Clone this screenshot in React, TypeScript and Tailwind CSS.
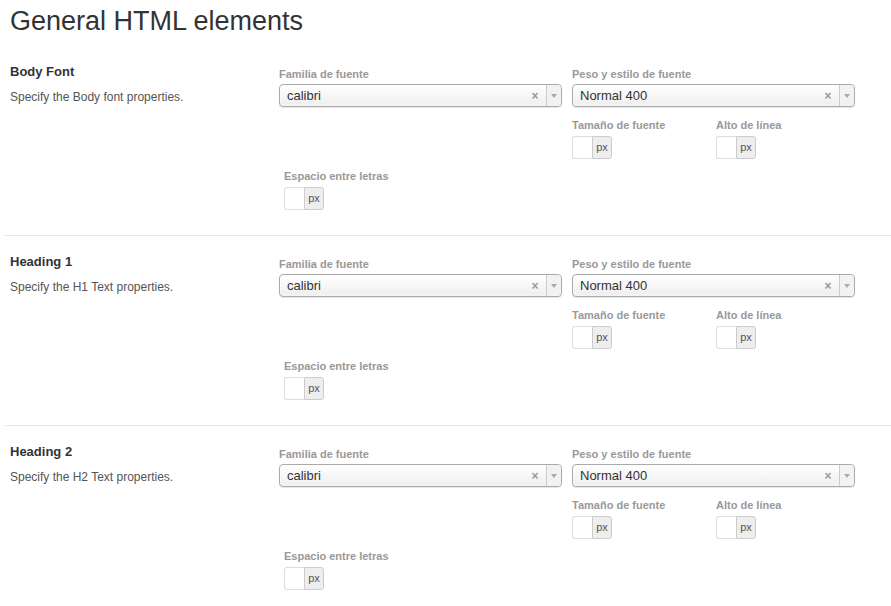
const sections = [
  { title: "Body Font", desc: "Specify the Body font properties." },
  { title: "Heading 1", desc: "Specify the H1 Text properties." },
  { title: "Heading 2", desc: "Specify the H2 Text properties." },
];

function FieldLabel({ children }: { children: React.ReactNode }) {
  return <div className="h-[14px] text-[11px] leading-[14px] font-bold text-[#999]">{children}</div>;
}

function Select({ value }: { value: string }) {
  return (
    <div className="mt-[3px] flex h-[23px] w-[283px] items-stretch rounded-[4px] border border-[#aaa] bg-gradient-to-b from-white to-[#eeeeee] shadow-[inset_0_0_3px_#fff,0_1px_1px_rgba(0,0,0,0.1)]">
      <div className="flex flex-1 items-center pl-[7px] text-[13px] text-[#333]">{value}</div>
      <div className="flex w-[22px] items-center justify-center text-[12px] font-bold text-[#999]">×</div>
      <div className="flex w-[15px] items-center justify-center rounded-r-[4px] border-l border-[#ccc] bg-[#f2f2f2]">
        <svg width="6" height="4" viewBox="0 0 6 4">
          <path d="M0 0 L6 0 L3 4 Z" fill="#aaa" />
        </svg>
      </div>
    </div>
  );
}

function PxInput() {
  return (
    <div className="mt-[4px] flex h-[23px] w-[40px]">
      <div className="w-[20px] rounded-l-[3px] border border-r-0 border-[#ddd] bg-white" />
      <div className="flex w-[20px] items-center justify-center rounded-r-[3px] border border-[#ccc] bg-[#eee] text-[11px] text-[#555]">
        px
      </div>
    </div>
  );
}

function Section({ title, desc }: { title: string; desc: string }) {
  return (
    <div className="ml-[5px] flex border-b border-[#e8e8e8] pt-[17px] pb-[25px]">
      <div className="w-[274px] pl-[5px]">
        <h3 className="h-[18px] text-[13px] leading-[18px] font-bold text-[#333]">{title}</h3>
        <p className="mt-[8px] text-[12px] leading-[16px] text-[#555]">{desc}</p>
      </div>
      <div className="pt-[4px]">
        <div className="flex gap-[10px]">
          <div>
            <FieldLabel>Familia de fuente</FieldLabel>
            <Select value="calibri" />
          </div>
          <div>
            <FieldLabel>Peso y estilo de fuente</FieldLabel>
            <Select value="Normal 400" />
          </div>
        </div>
        <div className="mt-[11px] flex pl-[293px]">
          <div className="w-[144px]">
            <FieldLabel>Tamaño de fuente</FieldLabel>
            <PxInput />
          </div>
          <div>
            <FieldLabel>Alto de línea</FieldLabel>
            <PxInput />
          </div>
        </div>
        <div className="mt-[10px] pl-[5px]">
          <FieldLabel>Espacio entre letras</FieldLabel>
          <PxInput />
        </div>
      </div>
    </div>
  );
}

export default function App() {
  return (
    <div className="min-h-screen bg-white font-['Liberation_Sans',Arial,sans-serif]">
      <h1 className="mb-[8px] h-[34px] pt-[4px] pl-[10px] text-[27px] leading-[34px] font-normal text-[#333] box-content">
        General HTML elements
      </h1>
      {sections.map((s) => (
        <Section key={s.title} title={s.title} desc={s.desc} />
      ))}
    </div>
  );
}
